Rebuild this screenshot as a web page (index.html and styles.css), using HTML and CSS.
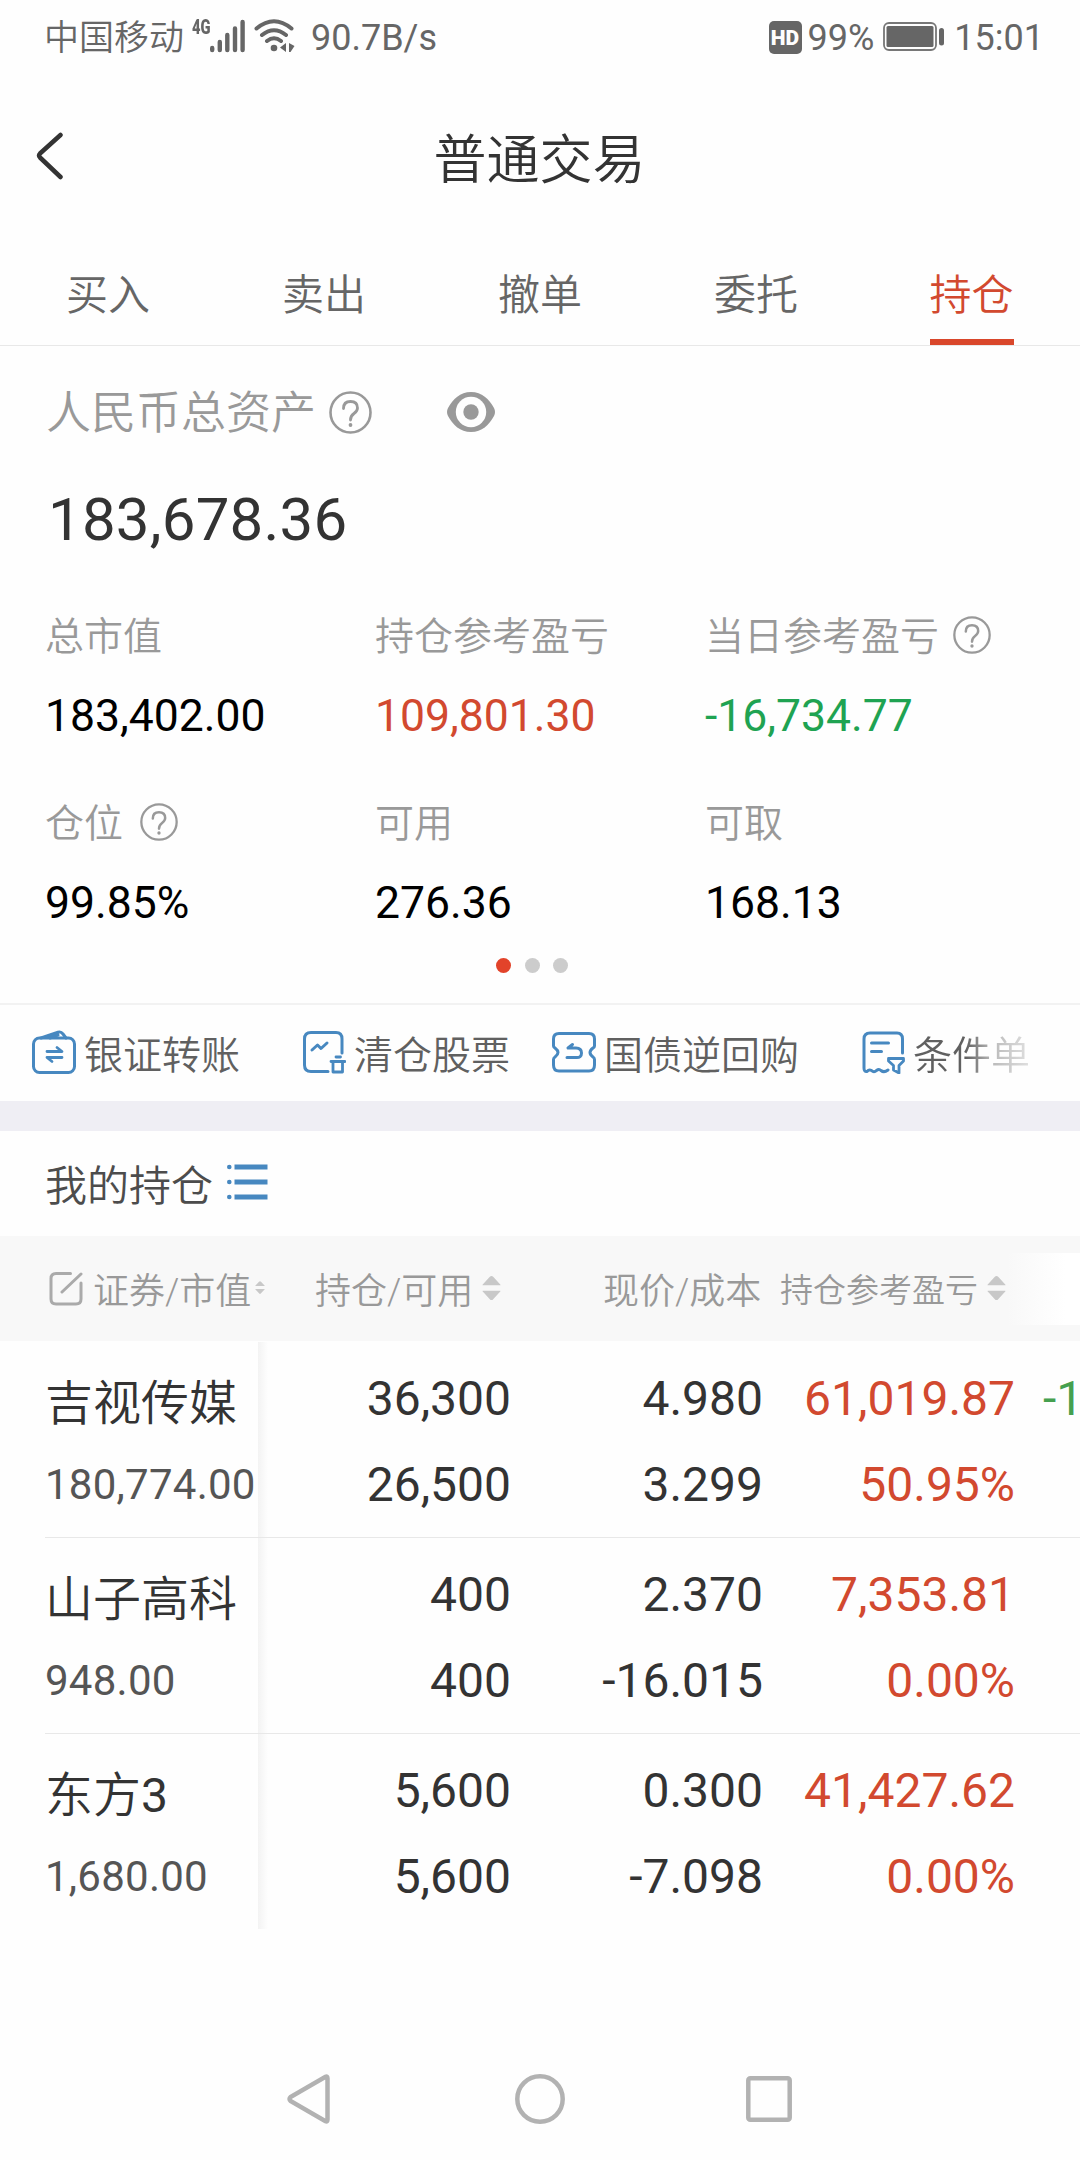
FILE: index.html
```html
<!DOCTYPE html>
<html lang="zh-CN">
    <head>
        <meta charset="utf-8">
        <title>普通交易</title>
        <link rel="stylesheet" href="styles.css">
    </head>
    <body>
        <div class="statusBar">
            <div class="statusLeft">
                <span class="carrier">中国移动</span>
                <span class="network">4G</span>
                <svg class="signal" width="35" height="34" viewBox="0 0 35 34" stroke="#666" stroke-width="4.4" stroke-linecap="round">
                    <path d="M2.2 29v2M9.8 23v8M17.3 16v15M25 9.500v21.500M32.600 3v28"/>
                </svg>
                <svg class="wifi" width="41" height="34" viewBox="0 0 41 34" fill="none" stroke="#666" stroke-width="4" stroke-linecap="round">
                    <path d="M2.500 9.500Q20 -5 37.500 9.500M8 16Q20 6.500 32 16M13 22Q20 16.500 27 22"/>
                    <circle cx="20" cy="29" r="3.300" fill="#666" stroke="none"/>
                    <path d="M32 24v9l-6-4.500zM35 24l5.500 3-4 6h-1.500z" fill="#666" stroke="none"/>
                </svg>
                <span class="digits">90.7B/s</span>
            </div>
            <div class="statusRight">
                <span class="hd">HD</span>
                <span class="digits percent">99%</span>
                <svg class="battery" width="62" height="30" viewBox="0 0 62 30">
                    <rect x="1" y="1" width="52" height="27" rx="5" fill="none" stroke="#777" stroke-width="1.800"/>
                    <rect x="3.500" y="4" width="47" height="21" rx="1.500" fill="#666"/>
                    <rect x="56" y="6" width="5" height="17.500" rx="2.500" fill="#666"/>
                </svg>
                <span class="digits">15:01</span>
            </div>
        </div>
        <header class="header">
            <svg class="back" width="28" height="48" viewBox="0 0 28 48" fill="none" stroke="#333" stroke-width="4.500" stroke-linecap="round" stroke-linejoin="round">
                <path d="M24.500 3L4 21.500Q2 23.500 4 25.500L24.500 45"/>
            </svg>
            <h1>普通交易</h1>
        </header>
        <nav class="tabs">
            <div class="tab"><span>买入</span></div>
            <div class="tab"><span>卖出</span></div>
            <div class="tab"><span>撤单</span></div>
            <div class="tab"><span>委托</span></div>
            <div class="tab active"><span>持仓</span></div>
        </nav>
        <section class="account">
            <div class="totalTitle">
                <span>人民币总资产</span>
                <svg class="help" width="43" height="43" viewBox="0 0 43 43"><use href="#question"/></svg>
                <svg class="eye" width="48" height="40" viewBox="0 0 48 40">
                    <path d="M24 0C35 0 42 7 47 16Q49 20 47 24C42 33 35 40 24 40S6 33 1 24Q-1 20 1 16C6 7 13 0 24 0z" fill="#999"/>
                    <circle cx="24" cy="20" r="15.200" fill="#fefefe"/>
                    <circle cx="24" cy="20" r="7.700" fill="#999"/>
                </svg>
            </div>
            <div class="total">183,678.36</div>
            <div class="figures">
                <div class="figure">
                    <div class="label"><span>总市值</span></div>
                    <div class="value">183,402.00</div>
                </div>
                <div class="figure">
                    <div class="label"><span>持仓参考盈亏</span></div>
                    <div class="value up">109,801.30</div>
                </div>
                <div class="figure">
                    <div class="label"><span>当日参考盈亏</span><svg width="38" height="38" viewBox="0 0 43 43"><use href="#question"/></svg></div>
                    <div class="value down">-16,734.77</div>
                </div>
                <div class="figure">
                    <div class="label"><span>仓位</span><svg class="wide" width="38" height="38" viewBox="0 0 43 43"><use href="#question"/></svg></div>
                    <div class="value">99.85%</div>
                </div>
                <div class="figure">
                    <div class="label"><span>可用</span></div>
                    <div class="value">276.36</div>
                </div>
                <div class="figure">
                    <div class="label"><span>可取</span></div>
                    <div class="value">168.13</div>
                </div>
            </div>
            <div class="dots"><i class="on"></i><i></i><i></i></div>
        </section>
        <section class="shortcuts">
            <div class="shortcut">
                <svg width="44" height="44" viewBox="0 0 44 44" class="blue">
                    <rect x="1.500" y="8" width="41" height="34.500" rx="6"/>
                    <path d="M9 8L26 2.200Q29 1.300 31 4L34 8M18 8l8-3"/>
                    <path d="M15 21.500h15l-5-4M30 27.500H15l5 4" stroke-width="2.800"/>
                </svg>
                <span>银证转账</span>
            </div>
            <div class="shortcut">
                <svg width="43" height="44" viewBox="0 0 43 44" class="blue">
                    <path d="M25 41.500H8Q1.500 41.500 1.500 35V9Q1.500 2.500 8 2.500H33Q39 2.500 39 9V23"/>
                    <path d="M9 20L14.500 15L18 18.500L24 13"/>
                    <path d="M28 31.500H42M33 27h4.500M30 32v10h9.500V32" stroke-width="2.800"/>
                </svg>
                <span>清仓股票</span>
            </div>
            <div class="shortcut">
                <svg width="44" height="44" viewBox="0 0 44 44" class="blue">
                    <path d="M7 3.500H37Q42.500 3.500 42.500 9V16Q42.500 17.500 41 18Q35 22.500 41 27Q42.500 28 42.500 29.500V35Q42.500 41 37 41H7Q1.500 41 1.500 35V29.500Q1.500 28 3 27Q9 22.500 3 18Q1.500 17 1.500 16V9Q1.500 3.500 7 3.500z"/>
                    <path d="M20.500 14.500L16 18H24Q29.500 18 29.500 23T24 27.500H15"/>
                </svg>
                <span>国债逆回购</span>
            </div>
            <div class="shortcut">
                <svg width="43" height="44" viewBox="0 0 43 44" class="blue">
                    <path d="M40.500 23V9Q40.500 3 35 3H8Q2 3 2 9V38Q2 42 5 41.500Q7 39 9.500 40.500Q12 43 14.500 40.500Q17 38.500 19 40.500Q22 43 26 40"/>
                    <path d="M9.500 13h17M9.500 21.500h10"/>
                    <path d="M26.500 28.500h15v2.500l-4.500 4.500v7.500l-5.500-3v-4.500l-5-4.500z" stroke-width="2.800"/>
                </svg>
                <span class="faded">条件单</span>
            </div>
        </section>
        <section class="holdings">
            <div class="holdingsTitle">
                <span>我的持仓</span>
                <svg width="41" height="36" viewBox="0 0 41 36" fill="#4788c0">
                    <circle cx="2.300" cy="3" r="2.300"/><rect x="7.500" y="0.500" width="33" height="5"/>
                    <circle cx="2.300" cy="18" r="2.300"/><rect x="7.500" y="15.500" width="33" height="5"/>
                    <circle cx="2.300" cy="33" r="2.300"/><rect x="7.500" y="30.500" width="33" height="5"/>
                </svg>
            </div>
            <div class="tableHead">
                <div class="th">
                    <svg class="edit" width="34" height="35" viewBox="0 0 34 35" fill="none" stroke="#aaa" stroke-width="3" stroke-linecap="round">
                        <path d="M21.500 2.500H7Q2 2.500 2 7.500V28Q2 33 7 33H27Q32 33 32 28V12M13 21L32 3"/>
                    </svg>
                    <span>证券/市值</span>
                    <svg class="sort" width="10" height="13" viewBox="0 0 20 26"><use href="#sort"/></svg>
                </div>
                <div class="th">
                    <span>持仓/可用</span>
                    <svg class="sort big" width="19" height="26" viewBox="0 0 20 26"><use href="#sort"/></svg>
                </div>
                <div class="th">
                    <span>现价/成本</span>
                </div>
                <div class="th small">
                    <span>持仓参考盈亏</span>
                    <svg class="sort big" width="19" height="26" viewBox="0 0 20 26"><use href="#sort"/></svg>
                </div>
                <div class="fade"></div>
            </div>
            <div class="row">
                <div class="cell stock">
                    <div class="name">吉视传媒</div>
                    <div class="amount">180,774.00</div>
                </div>
                <div class="cell shade"><div>36,300</div><div>26,500</div></div>
                <div class="cell"><div>4.980</div><div>3.299</div></div>
                <div class="cell up"><div>61,019.87</div><div>50.95%</div></div>
                <div class="cell next"><div>-1</div></div>
            </div>
            <div class="row">
                <div class="cell stock">
                    <div class="name">山子高科</div>
                    <div class="amount">948.00</div>
                </div>
                <div class="cell shade"><div>400</div><div>400</div></div>
                <div class="cell"><div>2.370</div><div>-16.015</div></div>
                <div class="cell up"><div>7,353.81</div><div>0.00%</div></div>
            </div>
            <div class="row">
                <div class="cell stock">
                    <div class="name">东方<span>3</span></div>
                    <div class="amount">1,680.00</div>
                </div>
                <div class="cell shade"><div>5,600</div><div>5,600</div></div>
                <div class="cell"><div>0.300</div><div>-7.098</div></div>
                <div class="cell up"><div>41,427.62</div><div>0.00%</div></div>
            </div>
        </section>
        <footer class="navBar">
            <svg width="43" height="50" viewBox="0 0 43 50"><path d="M38.500 2.800Q40.500 2 40.500 4.500V45.500Q40.500 48 38.500 47.200L3.500 27Q1.500 25 3.500 23z"/></svg>
            <svg width="50" height="50" viewBox="0 0 50 50"><circle cx="25" cy="25" r="22.700"/></svg>
            <svg width="46" height="46" viewBox="0 0 46 46"><rect x="2.300" y="2.300" width="41.400" height="41.400" rx="2"/></svg>
        </footer>

        <svg class="defs" width="0" height="0">
            <symbol id="question" viewBox="0 0 43 43">
                <circle cx="21.500" cy="21.500" r="20" fill="none" stroke="#999" stroke-width="2.600"/>
                <path d="M14.500 17.500Q14.500 10.500 21.500 10.500T28.500 17Q28.500 20 25 22.500Q21.500 25 21.500 29" fill="none" stroke="#999" stroke-width="2.800" stroke-linecap="round"/>
                <circle cx="21.500" cy="34" r="1.900" fill="#999"/>
            </symbol>
            <symbol id="sort" viewBox="0 0 20 26">
                <path d="M1 10Q0 10 1 9L8 1.500Q10 -1 12 1.500L19 9Q20 10 19 10zM1 16Q0 16 1 17L8 24.500Q10 27 12 24.500L19 17Q20 16 19 16z" fill="#c8c8c8"/>
            </symbol>
        </svg>
    </body>
</html>
```

FILE: styles.css
```css
*{
    margin: 0;
    padding: 0;
    box-sizing: border-box;
}
body{
    width: 1080px;
    height: 2160px;
    overflow: hidden;
    display: flex;
    flex-direction: column;
    background: #fefefe;
    color: #333;
    font-family: Roboto, "Noto Sans CJK SC", sans-serif;
    white-space: nowrap;
}
svg{
    display: block;
    flex: none;
}
.defs{
    position: absolute;
}
.up{
    color: #d2492f;
}
.down{
    color: #1fa352;
}

/* status bar */
.statusBar{
    height: 74px;
    padding: 0 36px 0 44px;
    display: flex;
    justify-content: space-between;
    font-size: 36px;
    line-height: 74px;
    color: #666;
}
.statusLeft, .statusRight{
    display: flex;
    align-items: center;
}
.digits{
    padding-top: 2px;
}
.carrier{
    width: 148px;
    padding-top: 4px;
    font-size: 35px;
    font-weight: 350;
}
.network{
    width: 18px;
    margin-bottom: 21px;
    font-size: 21px;
    font-weight: 900;
    line-height: 20px;
    transform: scaleX(0.7);
    transform-origin: left;
}
.signal{
    margin-top: -3px;
}
.wifi{
    margin: -3px 16px 0 9px;
}
.hd{
    width: 33px;
    height: 33px;
    margin-right: 6px;
    border-radius: 5px;
    background: #666;
    color: #fefefe;
    font-size: 21px;
    font-weight: 900;
    line-height: 34px;
    text-align: center;
}
.percent{
    margin-right: 9px;
}
.battery{
    margin-right: 9px;
}

/* title and tabs */
.header{
    height: 168px;
    display: flex;
    align-items: center;
    padding-left: 36px;
}
.back{
    margin-top: -4px;
}
.header h1{
    flex: 1;
    margin-right: 65px;
    padding-bottom: 5px;
    text-align: center;
    font-size: 53px;
    font-weight: 350;
}
.tabs{
    height: 104px;
    display: flex;
    border-bottom: 1px solid #e8e8e8;
    font-size: 42px;
    font-weight: 350;
    color: #666;
}
.tab{
    width: 216px;
    display: flex;
    justify-content: center;
}
.tab span{
    width: 84px;
    height: 103px;
    text-align: center;
    line-height: 107px;
}
.active{
    padding-right: 1px;
}
.active span{
    color: #d2492f;
    border-bottom: 6px solid #d9472b;
}

/* account summary */
.account{
    height: 657px;
    padding-left: 45px;
}
.totalTitle{
    height: 132px;
    display: flex;
    align-items: center;
    font-size: 45px;
    font-weight: 350;
    color: #999;
}
.totalTitle span{
    padding: 0 0 5px 1px;
}
.help{
    margin: 0 75px 0 13px;
}
.total{
    padding-left: 3px;
    font-size: 60px;
    letter-spacing: 0.2px;
    line-height: 84px;
}
.figures{
    margin-top: 33px;
    display: grid;
    grid-template-columns: repeat(3, 330px);
    row-gap: 27px;
}
.label{
    height: 80px;
    display: flex;
    align-items: center;
    gap: 14px;
    font-size: 39px;
    font-weight: 350;
    color: #999;
}
.label span{
    padding-bottom: 4px;
}
.wide{
    margin-left: 3px;
}
.value{
    height: 80px;
    font-size: 44.500px;
    line-height: 82px;
    color: #000;
}
.value.up{
    color: #d2492f;
}
.value.down{
    color: #1fa352;
}
.dots{
    margin: 16px 0 0 451px;
    display: flex;
    gap: 13.500px;
}
.dots i{
    width: 15px;
    height: 15px;
    border-radius: 50%;
    background: #ccc;
}
.dots .on{
    background: #e2432a;
}

/* shortcuts */
.shortcuts{
    height: 98px;
    padding: 0 0 3px 32px;
    border-top: 2px solid #f2f2f2;
    display: grid;
    grid-template-columns: 271px 249px 310px 1fr;
    align-items: center;
    font-size: 39px;
    font-weight: 350;
    color: #606060;
}
.shortcut{
    display: flex;
    align-items: center;
    gap: 8px;
}
.blue{
    fill: none;
    stroke: #4788c0;
    stroke-width: 3;
    stroke-linecap: round;
    stroke-linejoin: round;
}
.faded{
    background: linear-gradient(to right, #606060 45%, #bbb 68%, #e0e0e0);
    -webkit-background-clip: text;
    background-clip: text;
    color: transparent;
}

/* holdings */
.holdings{
    border-top: 30px solid #efeef4;
}
.holdingsTitle{
    height: 105px;
    padding-left: 45px;
    display: flex;
    align-items: center;
    gap: 14px;
    font-size: 42px;
    font-weight: 350;
    color: #4c4c4c;
}
.holdingsTitle span{
    padding-bottom: 2px;
}
.holdingsTitle svg{
    margin-top: -3px;
}
.tableHead{
    height: 105px;
    margin-bottom: 1px;
    padding-left: 49px;
    display: grid;
    grid-template-columns: 266px 288px 177px 227px 73px;
    align-items: center;
    background: #f8f8f8;
    font-size: 36px;
    font-weight: 350;
    color: #999;
}
.th{
    display: flex;
    align-items: center;
}
.th span{
    padding-bottom: 1px;
}
.edit{
    margin-right: 10px;
}
.sort{
    margin: -2px 0 0 4px;
}
.sort.big{
    margin-left: 9px;
}
.small{
    font-size: 33px;
}
.fade{
    height: 72px;
    background: linear-gradient(to right, #f8f8f8, #fff 80%);
}
.row{
    height: 196px;
    margin-left: 45px;
    display: grid;
    grid-template-columns: 213px 253px 252px 252px 65px;
    border-bottom: 1px solid #e8e8e8;
    font-size: 48px;
    line-height: 86px;
}
.row:last-child{
    height: 195px;
    border-bottom: none;
}
.cell{
    padding-top: 14px;
    text-align: right;
}
.stock{
    text-align: left;
}
.name{
    height: 86px;
    padding-top: 5px;
    font-weight: 350;
}
.name span{
    font-weight: 400;
}
.amount{
    font-size: 42px;
    letter-spacing: 0.250px;
    color: #555;
}
.shade{
    background: linear-gradient(to right, #f3f3f3, #fefefe) no-repeat left / 10px 100%;
}
.next{
    padding-left: 28px;
    text-align: left;
    color: #45a04f;
}

/* android buttons */
.navBar{
    margin-top: auto;
    height: 122px;
    padding-left: 287px;
    display: flex;
    align-items: center;
}
.navBar svg{
    margin-right: 185px;
    fill: none;
    stroke: #b2b2b2;
    stroke-width: 4.500;
}
.navBar svg:nth-child(2){
    margin-right: 181px;
}
```
